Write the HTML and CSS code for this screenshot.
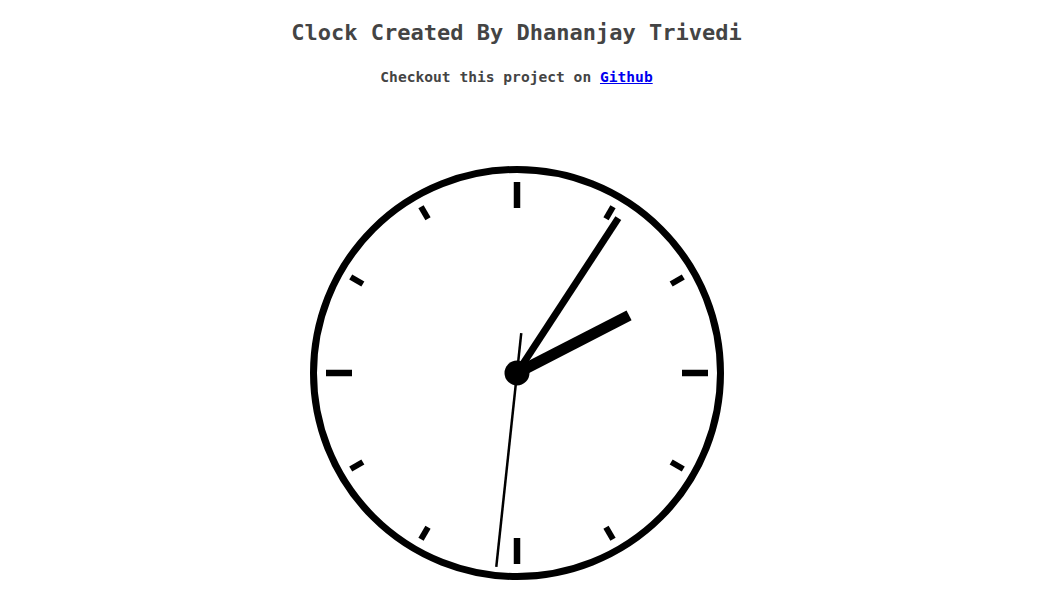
FILE: index.html
```html
<!DOCTYPE html>
<html lang="en">
<head>
<meta charset="utf-8">
<title>Clock</title>
<link rel="stylesheet" href="styles.css">
</head>
<body>
<h1 class="title">Clock Created By Dhananjay Trivedi</h1>
<p class="subtitle">Checkout this project on <a href="#" class="link">Github</a></p>
<div class="clock">
<svg class="face" width="414" height="414" viewBox="0 0 414 414" xmlns="http://www.w3.org/2000/svg">
  <circle cx="207" cy="207" r="203.5" fill="#fff" stroke="#000" stroke-width="7"/>
  <g stroke="#000" stroke-width="6.5">
    <line x1="207" y1="16" x2="207" y2="42" transform="rotate(0 207 207)"/>
    <line x1="207" y1="16" x2="207" y2="42" transform="rotate(90 207 207)"/>
    <line x1="207" y1="16" x2="207" y2="42" transform="rotate(180 207 207)"/>
    <line x1="207" y1="16" x2="207" y2="42" transform="rotate(270 207 207)"/>
  </g>
  <g stroke="#000" stroke-width="6">
    <line x1="207" y1="15" x2="207" y2="29" transform="rotate(30 207 207)"/>
    <line x1="207" y1="15" x2="207" y2="29" transform="rotate(60 207 207)"/>
    <line x1="207" y1="15" x2="207" y2="29" transform="rotate(120 207 207)"/>
    <line x1="207" y1="15" x2="207" y2="29" transform="rotate(150 207 207)"/>
    <line x1="207" y1="15" x2="207" y2="29" transform="rotate(210 207 207)"/>
    <line x1="207" y1="15" x2="207" y2="29" transform="rotate(240 207 207)"/>
    <line x1="207" y1="15" x2="207" y2="29" transform="rotate(300 207 207)"/>
    <line x1="207" y1="15" x2="207" y2="29" transform="rotate(330 207 207)"/>
  </g>
  <line x1="207" y1="207" x2="207" y2="81" stroke="#000" stroke-width="11" transform="rotate(62.8 207 207)"/>
  <line x1="207" y1="207" x2="207" y2="22" stroke="#000" stroke-width="7" transform="rotate(33.2 207 207)"/>
  <line x1="207" y1="12" x2="207" y2="247" stroke="#000" stroke-width="2.5" transform="rotate(186.1 207 207)"/>
  <circle cx="207" cy="207" r="12.5" fill="#000"/>
</svg>
</div>
</body>
</html>
```
FILE: styles.css
```css
html, body {
  margin: 0;
  background: #fff;
}
body {
  padding: 0 8px 0 0;
  font-family: "DejaVu Sans Mono", "Liberation Mono", monospace;
  color: #444;
  text-align: center;
}
.title {
  margin: 20px 0 0;
  font-size: 22px;
  line-height: 26px;
  font-weight: bold;
}
.subtitle {
  margin: 22px 0 0;
  font-size: 14.6px;
  line-height: 18px;
  font-weight: bold;
}
.link {
  color: #0000ee;
  text-decoration: underline;
}
.clock {
  width: 414px;
  height: 414px;
  margin: 80px auto 0;
}
.face {
  display: block;
}
```
